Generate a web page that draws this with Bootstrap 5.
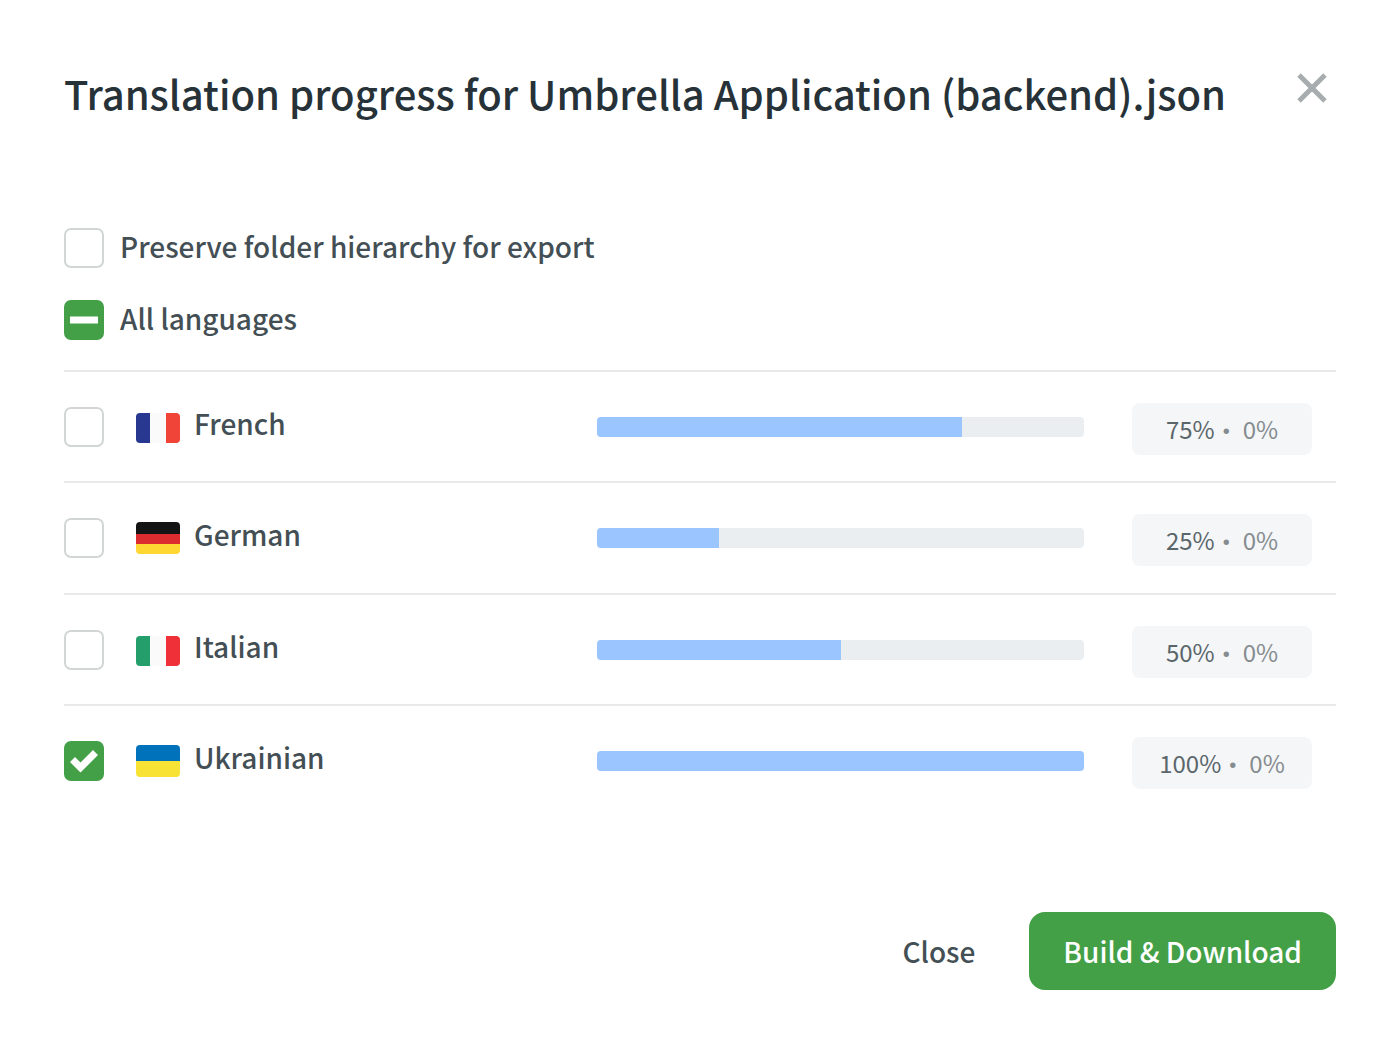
<!DOCTYPE html>
<html lang="en">
<head>
<meta charset="utf-8">
<meta name="viewport" content="width=device-width, initial-scale=1">
<title>Translation progress</title>
<link href="https://cdn.jsdelivr.net/npm/bootstrap@5.3.0/dist/css/bootstrap.min.css" rel="stylesheet">
<style>
  body { font-family: "Noto Sans CJK SC", "Noto Sans", sans-serif; font-size: 28px; line-height: 40px; font-weight: 500; color: #434f54; background: #fff; }
  .dialog-pane { padding: 64px; }
  .dialog-title { font-size: 40px; line-height: 58px; font-weight: 500; color: #263238; }
  .close-x { width: 48px; height: 48px; color: #a7adaf; line-height: 0; }
  .options { margin-top: 106px; margin-bottom: 30px; gap: 32px; }
  .options label { margin-top: -4px; }
  .tick { width: 40px; height: 40px; margin: 0; border: 2px solid #d2d6d7; border-radius: 8px; flex: none; }
  .form-check-input.tick:checked, .form-check-input.tick:indeterminate { background-color: #43a047; border-color: #43a047; background-size: 40px 40px; background-position: center; background-origin: border-box; }
  .form-check-input.tick:checked { background-image: url("data:image/svg+xml,%3csvg xmlns='http://www.w3.org/2000/svg' viewBox='0 0 40 40'%3e%3cpath fill='%23fff' d='M6 21l5-5 5.500 5.500L29 9l5 5-17.500 17.500z'/%3e%3c/svg%3e"); }
  .form-check-input.tick:indeterminate { background-image: url("data:image/svg+xml,%3csvg xmlns='http://www.w3.org/2000/svg' viewBox='0 0 40 40'%3e%3cpath fill='%23fff' d='M6 16.500h28v7H6z'/%3e%3c/svg%3e"); }
  .lang-row { display: grid; grid-template-columns: minmax(0, 533fr) minmax(0, 487fr) 228px; align-items: center; height: 111px; padding-right: 24px; border-top: 2px solid #e8e9ea; }
  .lang-row:nth-child(even) { height: 112px; }
  .flag { width: 44px; height: 32px; margin-left: 32px; margin-right: 14px; flex: none; }
  .lang-name { margin-top: -4px; margin-bottom: 4px; }
  .progress.lang-bar { height: 20px; border-radius: 4px; background: #eaeef1; }
  .lang-bar .progress-bar { background: #9bc5ff; transition: none; }
  .stat { height: 52px; margin-left: 48px; margin-top: 4px; border-radius: 8px; background: #f5f6f8; color: #858c8f; font-size: 24px; font-weight: 400; }
  .stat-done { color: #5b666b; }
  .stat-dot { font-family: "Liberation Sans", sans-serif; font-size: 20px; margin-top: 4px; margin-left: 8px; margin-right: 13px; }
  .actions { margin-top: 96px; gap: 20px; }
  .btn.act { font-size: 28px; line-height: 40px; font-weight: 500; padding: 17px 32px; border: 2px solid transparent; border-radius: 16px; }
  .btn.act-close { color: #434f54; }
  .btn.act-build { color: #fff; background: #43a047; border-color: #43a047; }
</style>
</head>
<body>
<main class="dialog-pane">
  <header class="d-flex justify-content-between align-items-start">
    <h1 class="dialog-title m-0">Translation progress for Umbrella Application (backend).json</h1>
    <button type="button" class="btn close-x p-0 border-0" aria-label="Close dialog">
      <svg width="48" height="48" viewBox="0 0 48 48" fill="none" stroke="currentColor" stroke-width="5"><path d="M11 11l26 26M37 11L11 37"/></svg>
    </button>
  </header>

  <form>
    <div class="options d-flex flex-column">
      <div class="d-flex align-items-center gap-3">
        <input class="form-check-input tick" type="checkbox" id="preserve">
        <label for="preserve">Preserve folder hierarchy for export</label>
      </div>
      <div class="d-flex align-items-center gap-3">
        <input class="form-check-input tick" type="checkbox" id="all">
        <label for="all">All languages</label>
      </div>
    </div>

    <ul class="list-unstyled m-0">
      <li class="lang-row">
        <div class="d-flex align-items-center">
          <input class="form-check-input tick" type="checkbox" id="fr">
          <svg class="flag" viewBox="0 0 44 32"><clipPath id="c3"><rect y="2" width="44" height="30" rx="4"/></clipPath><g clip-path="url(#c3)"><path fill="#fafafa" d="M0 0h44v32H0z"/><path fill="#283790" d="M0 0h14v32H0z"/><path fill="#f04438" d="M30 0h14v32H30z"/></g></svg>
          <label class="lang-name" for="fr">French</label>
        </div>
        <div class="progress lang-bar" role="progressbar" aria-label="French" aria-valuenow="75" aria-valuemin="0" aria-valuemax="100"><div class="progress-bar" style="width:75%"></div></div>
        <div class="stat d-flex align-items-center justify-content-center"><span class="stat-done">75%</span><span class="stat-dot">•</span><span>0%</span></div>
      </li>
      <li class="lang-row">
        <div class="d-flex align-items-center">
          <input class="form-check-input tick" type="checkbox" id="de">
          <svg class="flag" viewBox="0 0 44 32"><clipPath id="c4"><rect width="44" height="32" rx="4"/></clipPath><g clip-path="url(#c4)"><path fill="#141414" d="M0 0h44v12H0z"/><path fill="#dd2c30" d="M0 12h44v10H0z"/><path fill="#ffd733" d="M0 22h44v10H0z"/></g></svg>
          <label class="lang-name" for="de">German</label>
        </div>
        <div class="progress lang-bar" role="progressbar" aria-label="German" aria-valuenow="25" aria-valuemin="0" aria-valuemax="100"><div class="progress-bar" style="width:25%"></div></div>
        <div class="stat d-flex align-items-center justify-content-center"><span class="stat-done">25%</span><span class="stat-dot">•</span><span>0%</span></div>
      </li>
      <li class="lang-row">
        <div class="d-flex align-items-center">
          <input class="form-check-input tick" type="checkbox" id="it">
          <svg class="flag" viewBox="0 0 44 32"><g clip-path="url(#c3)"><path fill="#fafafa" d="M0 0h44v32H0z"/><path fill="#249f6c" d="M0 0h14v32H0z"/><path fill="#f03038" d="M30 0h14v32H30z"/></g></svg>
          <label class="lang-name" for="it">Italian</label>
        </div>
        <div class="progress lang-bar" role="progressbar" aria-label="Italian" aria-valuenow="50" aria-valuemin="0" aria-valuemax="100"><div class="progress-bar" style="width:50%"></div></div>
        <div class="stat d-flex align-items-center justify-content-center"><span class="stat-done">50%</span><span class="stat-dot">•</span><span>0%</span></div>
      </li>
      <li class="lang-row">
        <div class="d-flex align-items-center">
          <input class="form-check-input tick" type="checkbox" id="uk" checked>
          <svg class="flag" viewBox="0 0 44 32"><g clip-path="url(#c4)"><path fill="#0072bc" d="M0 0h44v16H0z"/><path fill="#f8e233" d="M0 16h44v16H0z"/></g></svg>
          <label class="lang-name" for="uk">Ukrainian</label>
        </div>
        <div class="progress lang-bar" role="progressbar" aria-label="Ukrainian" aria-valuenow="100" aria-valuemin="0" aria-valuemax="100"><div class="progress-bar" style="width:100%"></div></div>
        <div class="stat d-flex align-items-center justify-content-center"><span class="stat-done">100%</span><span class="stat-dot">•</span><span>0%</span></div>
      </li>
    </ul>

    <div class="actions d-flex justify-content-end">
      <button type="button" class="btn act act-close">Close</button>
      <button type="button" class="btn act act-build">Build &amp; Download</button>
    </div>
  </form>
</main>
<script src="https://cdn.jsdelivr.net/npm/bootstrap@5.3.0/dist/js/bootstrap.bundle.min.js"></script>
<script>document.getElementById('all').indeterminate = true;</script>
</body>
</html>
